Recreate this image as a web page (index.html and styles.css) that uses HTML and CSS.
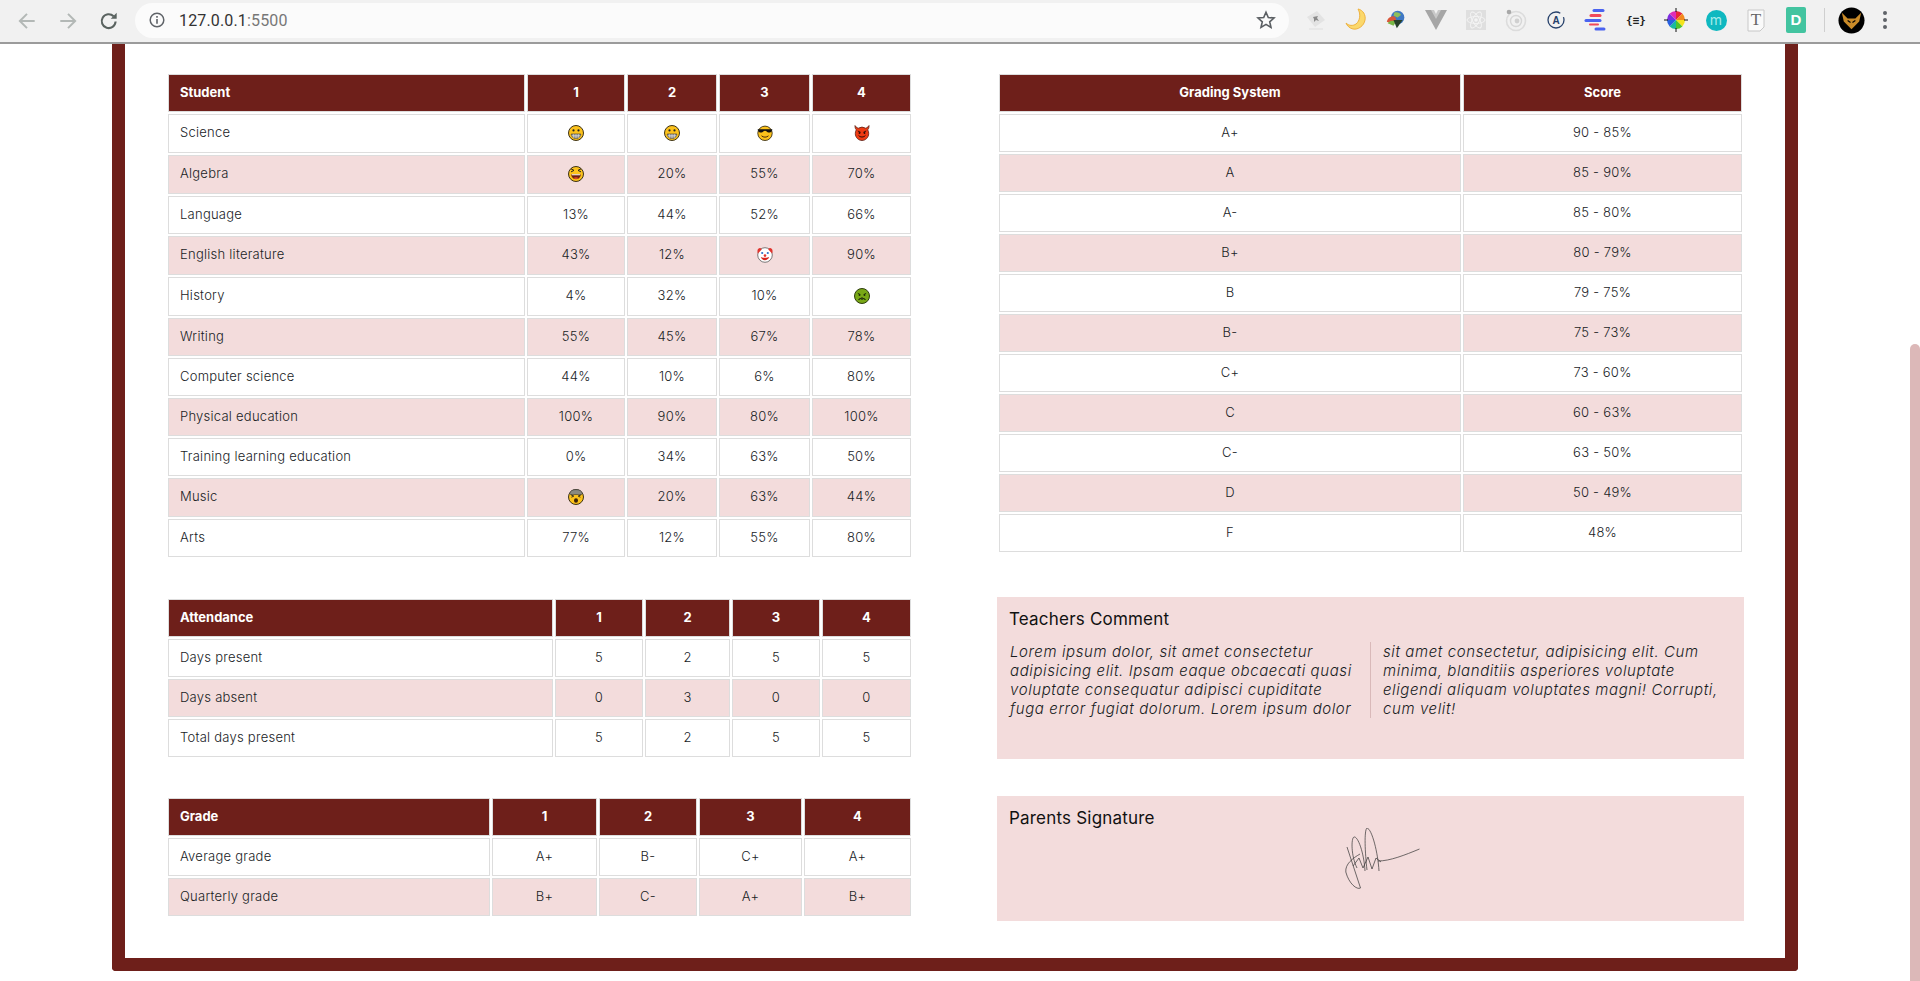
FILE: index.html
```html
<!DOCTYPE html>
<html lang="en">
<head>
<meta charset="utf-8">
<title>Report card</title>
<link rel="stylesheet" href="styles.css">
</head>
<body>
<svg class="defs" width="0" height="0" aria-hidden="true">
  <symbol id="e-grin" viewBox="0 0 16 16">
    <circle cx="8" cy="8" r="7.500" fill="#fcc21b" stroke="#3d3216" stroke-width="1"/>
    <path d="M3.200 9h9.600c0 2.600-2.100 4.500-4.800 4.500S3.200 11.600 3.200 9z" fill="#9a9a9a" stroke="#333" stroke-width=".6"/>
    <path d="M3.500 10.800h9M5.600 9v4M8 9v4.500M10.400 9v4" stroke="#ececec" stroke-width=".5"/>
    <circle cx="5.500" cy="5.400" r="1.100" fill="#222"/><circle cx="10.500" cy="5.400" r="1.100" fill="#222"/>
  </symbol>
  <symbol id="e-cool" viewBox="0 0 16 16">
    <circle cx="8" cy="8.300" r="7.200" fill="#fcc21b" stroke="#3d3216" stroke-width=".9"/>
    <path d="M.6 4.300h14.800l-.5 1.200c-.4 2.200-2.800 2.400-4.300 1.700-1-.5-1.400-1.500-2.600-1.500s-1.600 1-2.600 1.500c-1.500.7-3.900.5-4.300-1.700z" fill="#111"/>
    <path d="M4.500 10.800c1.800 1.800 5.200 1.800 7 0" fill="none" stroke="#4a2b08" stroke-width="1"/>
  </symbol>
  <symbol id="e-devil" viewBox="0 0 16 16">
    <path d="M1 .6C1 3 1.500 4 2.300 4.800a7 7 0 0 0-1 3.700c0 4 3.200 7 6.700 7s6.700-3 6.700-7a7 7 0 0 0-1-3.700C14.500 4 15 3 15 .6c-1 1.500-2.300 2.400-3.400 2.600a6.800 6.800 0 0 0-7.200 0C3.300 3 2 2.100 1 .6z" fill="#ee3a12" stroke="#5b2015" stroke-width=".8"/>
    <path d="M3.800 6l2.800 1.300M12.200 6L9.400 7.300" stroke="#3a100a" stroke-width="1"/>
    <circle cx="5.500" cy="8" r=".9" fill="#2a0a05"/><circle cx="10.500" cy="8" r=".9" fill="#2a0a05"/>
    <path d="M4.600 10.500c1.700 2 5.100 2 6.800 0" fill="none" stroke="#2a0a05" stroke-width="1"/>
  </symbol>
  <symbol id="e-laugh" viewBox="0 0 16 16">
    <circle cx="8" cy="8" r="7.500" fill="#fcc21b" stroke="#3d3216" stroke-width="1"/>
    <path d="M3 2.800l3 1.600-3 1.500M13 2.800l-3 1.600 3 1.500" fill="none" stroke="#222" stroke-width="1"/>
    <path d="M3.200 8.300h9.600c0 3-2.100 4.900-4.800 4.900s-4.800-1.900-4.800-4.900z" fill="#6e1f0e"/>
    <path d="M3.600 8.300h8.800l-.3 1H3.900z" fill="#fff"/>
    <path d="M5.500 12c1.500-1 3.500-1 5 0-1.400 1.300-3.600 1.300-5 0z" fill="#e8482a"/>
  </symbol>
  <symbol id="e-clown" viewBox="0 0 16 16">
    <circle cx="8" cy="8" r="7.300" fill="#fff" stroke="#5b5b5b" stroke-width=".8"/>
    <path d="M.9 6.500C-.3 3.500.9 1 3.200 1.100c.8.100 1.300.7 1.500 1.400zM15.100 6.500c1.200-3 0-5.500-2.300-5.400-.8.100-1.300.7-1.500 1.400z" fill="#e0342d"/>
    <circle cx="5.200" cy="6" r="1.100" fill="#2b70c9"/><circle cx="10.800" cy="6" r="1.100" fill="#2b70c9"/>
    <circle cx="8" cy="8.600" r="1.300" fill="#e0342d"/>
    <path d="M3.800 10c1.500 4.200 6.900 4.200 8.400 0-1.600 1-6.800 1-8.400 0z" fill="#d9231d"/>
  </symbol>
  <symbol id="e-sick" viewBox="0 0 16 16">
    <circle cx="8" cy="8" r="7.500" fill="#79a816" stroke="#2e3d10" stroke-width="1"/>
    <path d="M3.800 5.300l2.500 1.300M12.200 5.300L9.700 6.600" stroke="#1e2a08" stroke-width=".9"/>
    <circle cx="5.500" cy="7" r=".9" fill="#1e2a08"/><circle cx="10.500" cy="7" r=".9" fill="#1e2a08"/>
    <path d="M4.500 12c1.300-2.400 5.700-2.400 7 0" fill="none" stroke="#1e2a08" stroke-width="1.100"/>
    <path d="M7 9.500h2v2.200H7z" fill="#2e3d10"/>
  </symbol>
  <symbol id="e-shock" viewBox="0 0 16 16">
    <circle cx="8" cy="8" r="7.500" fill="#fcc21b" stroke="#3d3216" stroke-width="1"/>
    <path d="M1.600 4.700C2.300 1.500 5 .6 8 .6s5.700.9 6.400 4.100c-1 1.700-3.200.8-6.400.8s-5.400.9-6.400-.8z" fill="#8a8a80" stroke="#333" stroke-width=".6"/>
    <path d="M3.200 6l2.600 1.100L3.400 8.200M12.800 6l-2.600 1.100 2.200 1.100" fill="none" stroke="#222" stroke-width=".9"/>
    <ellipse cx="8" cy="11.500" rx="2" ry="2.300" fill="#3a2108"/>
  </symbol>
</svg>

<header class="chrome">
  <nav class="nav-buttons">
    <svg class="nav-icon" viewBox="0 0 20 20"><path d="M17 10H4M10 3.500L3.500 10l6.500 6.500" fill="none" stroke="#b3b8b6" stroke-width="1.800"/></svg>
    <svg class="nav-icon" viewBox="0 0 20 20"><path d="M3 10h13M10 3.500l6.500 6.500-6.500 6.500" fill="none" stroke="#b3b8b6" stroke-width="1.800"/></svg>
    <svg class="nav-icon" viewBox="0 0 20 20"><path d="M16 10.500a6.300 6.300 0 1 1-1.800-4.800" fill="none" stroke="#5a6360" stroke-width="1.900"/><path d="M17 2.600V8h-5.400z" fill="#5a6360"/></svg>
  </nav>
  <div class="omnibox">
    <svg class="info-icon" viewBox="0 0 16 16"><circle cx="8" cy="8" r="6.800" fill="none" stroke="#5f6368" stroke-width="1.500"/><path d="M7.200 7h1.600v4.800H7.200zM7.200 4.100h1.600v1.600H7.200z" fill="#5f6368"/></svg>
    <span class="url">127.0.0.1<span class="port">:5500</span></span>
    <svg class="star-icon" viewBox="0 0 20 20"><path d="M10 2.200l2.300 5.300 5.700.5-4.300 3.800 1.300 5.600-5-3-5 3 1.300-5.600L2 8l5.700-.5z" fill="none" stroke="#5b5f63" stroke-width="1.600"/></svg>
  </div>
  <div class="extensions">
    <span class="ext"><svg viewBox="0 0 24 24" width="24" height="24"><path d="M3 9l10-6 8 9-10 7z" fill="#e3e3e3"/><path d="M9 9l5-1-1 2 2 3-3-1-2 2 0-3z" fill="#8a8a8a"/><path d="M5 21h14" stroke="#e4e4e4" stroke-width="1.500"/></svg></span>
    <span class="ext"><svg viewBox="0 0 24 24" width="24" height="24"><path d="M14 1c5 1 8 6 7 11-1 6-7 10-12 9-3-.6-6-3-7-6 3 3 7 3 10 1 4-3 5-10 2-15z" fill="#fbd86b" stroke="#eeb23f" stroke-width="1"/></svg></span>
    <span class="ext"><svg viewBox="0 0 24 24" width="20" height="20"><circle cx="14" cy="9" r="8" fill="#3f78c4"/><path d="M10 3c3-1 7 0 8 3l-4 3-5-2z" fill="#8fbf5a"/><path d="M1 14c1-5 6-8 10-6l2 6-7 2z" fill="#d9563a"/><path d="M2 16c2-3 6-4 10-2l-3 5z" fill="#79b845"/><path d="M9 12h11l-7 10z" fill="#27402a"/></svg></span>
    <span class="ext"><svg viewBox="0 0 24 24" width="24" height="24"><path d="M1 2h7l4 7 4-7h7L12 22z" fill="#a6a6a6"/><path d="M7 2h3l2 4 2-4h3l-5 9z" fill="#c8c8c8"/></svg></span>
    <span class="ext"><svg viewBox="0 0 24 24" width="24" height="24"><rect x="2" y="2" width="20" height="20" fill="#dfdfdf"/><g fill="none" stroke="#f5f5f5" stroke-width=".9"><ellipse cx="12" cy="12" rx="9" ry="3.500"/><ellipse cx="12" cy="12" rx="9" ry="3.500" transform="rotate(60 12 12)"/><ellipse cx="12" cy="12" rx="9" ry="3.500" transform="rotate(120 12 12)"/></g><circle cx="12" cy="12" r="1.800" fill="#f5f5f5"/></svg></span>
    <span class="ext"><svg viewBox="0 0 24 24" width="24" height="24"><circle cx="12" cy="13" r="9.500" fill="none" stroke="#dcdcdc" stroke-width="1.600"/><circle cx="12" cy="13" r="5.500" fill="none" stroke="#d6d6d6" stroke-width="1.400"/><circle cx="13" cy="13" r="2.400" fill="#d0d0d0"/><circle cx="5" cy="4" r="2.300" fill="#a8a8a8"/></svg></span>
    <span class="ext"><svg viewBox="0 0 24 24" width="24" height="24"><circle cx="12" cy="12" r="8" fill="none" stroke="#27416b" stroke-width="1.300" stroke-dasharray="42 5"/><text class="ext-a" x="12" y="16" text-anchor="middle">A</text></svg></span>
    <span class="ext"><svg viewBox="0 0 24 24" width="24" height="24"><path d="M10 2.500h9" stroke="#4a63f0" stroke-width="3" stroke-linecap="round"/><path d="M7 7.500h9" stroke="#f0485a" stroke-width="3" stroke-linecap="round"/><path d="M2 12.500h14" stroke="#4a63f0" stroke-width="3" stroke-linecap="round"/><path d="M6 16.500h8" stroke="#f0485a" stroke-width="2" stroke-linecap="round"/><path d="M12 21h8" stroke="#4a63f0" stroke-width="3" stroke-linecap="round"/></svg></span>
    <span class="ext"><span class="ext-json">{≡}</span></span>
    <span class="ext"><svg viewBox="0 0 24 24" width="24" height="24"><path d="M12 3a9 9 0 0 1 6.400 2.600L12 12z" fill="#e9243a"/><path d="M18.400 5.600A9 9 0 0 1 21 12h-9z" fill="#f28a1e"/><path d="M21 12a9 9 0 0 1-2.600 6.400L12 12z" fill="#f4e31c"/><path d="M18.400 18.400A9 9 0 0 1 12 21v-9z" fill="#4dc42d"/><path d="M12 21a9 9 0 0 1-6.400-2.600L12 12z" fill="#18b9a0"/><path d="M5.600 18.400A9 9 0 0 1 3 12h9z" fill="#2760e0"/><path d="M3 12a9 9 0 0 1 2.600-6.400L12 12z" fill="#7b2ddf"/><path d="M5.600 5.600A9 9 0 0 1 12 3v9z" fill="#e02bb6"/><path d="M12 0v4M12 20v4M0 12h4M20 12h4" stroke="#111" stroke-width="1"/></svg></span>
    <span class="ext"><span class="ext-m">m</span></span>
    <span class="ext"><svg viewBox="0 0 24 24" width="24" height="24"><path d="M4 2h16v17l-4 4H4z" fill="#fafafa" stroke="#c8c8c8"/><text class="ext-t" x="12" y="17" text-anchor="middle">T</text></svg></span>
    <span class="ext"><span class="ext-d">D</span></span>
    <span class="ext-divider"></span>
    <span class="avatar"><svg viewBox="0 0 28 28" width="27" height="27"><circle cx="14" cy="14" r="13.500" fill="#000"/><path d="M4 6l6 6h8l6-6-2 9-8 8-8-8z" fill="#c98a28"/><path d="M10 14l3 2M18 14l-3 2" stroke="#000" stroke-width="1.200"/></svg></span>
    <span class="kebab"><i></i><i></i><i></i></span>
  </div>
</header>

<main class="sheet">
  <div class="sheet-grid">
    <table class="report student-table">
      <colgroup><col><col><col><col><col></colgroup>
      <thead><tr><th class="name">Student</th><th>1</th><th>2</th><th>3</th><th>4</th></tr></thead>
      <tbody>
        <tr class="tall"><td class="name">Science</td><td><svg class="emoji"><use href="#e-grin"/></svg></td><td><svg class="emoji"><use href="#e-grin"/></svg></td><td><svg class="emoji"><use href="#e-cool"/></svg></td><td><svg class="emoji"><use href="#e-devil"/></svg></td></tr>
        <tr class="tall"><td class="name">Algebra</td><td><svg class="emoji"><use href="#e-laugh"/></svg></td><td>20%</td><td>55%</td><td>70%</td></tr>
        <tr><td class="name">Language</td><td>13%</td><td>44%</td><td>52%</td><td>66%</td></tr>
        <tr class="tall"><td class="name">English literature</td><td>43%</td><td>12%</td><td><svg class="emoji"><use href="#e-clown"/></svg></td><td>90%</td></tr>
        <tr class="tall"><td class="name">History</td><td>4%</td><td>32%</td><td>10%</td><td><svg class="emoji"><use href="#e-sick"/></svg></td></tr>
        <tr><td class="name">Writing</td><td>55%</td><td>45%</td><td>67%</td><td>78%</td></tr>
        <tr><td class="name">Computer science</td><td>44%</td><td>10%</td><td>6%</td><td>80%</td></tr>
        <tr><td class="name">Physical education</td><td>100%</td><td>90%</td><td>80%</td><td>100%</td></tr>
        <tr><td class="name">Training learning education</td><td>0%</td><td>34%</td><td>63%</td><td>50%</td></tr>
        <tr class="tall"><td class="name">Music</td><td><svg class="emoji"><use href="#e-shock"/></svg></td><td>20%</td><td>63%</td><td>44%</td></tr>
        <tr><td class="name">Arts</td><td>77%</td><td>12%</td><td>55%</td><td>80%</td></tr>
      </tbody>
    </table>

    <table class="report scale-table">
      <colgroup><col><col></colgroup>
      <thead><tr><th>Grading System</th><th>Score</th></tr></thead>
      <tbody>
        <tr><td>A+</td><td>90 - 85%</td></tr>
        <tr><td>A</td><td>85 - 90%</td></tr>
        <tr><td>A-</td><td>85 - 80%</td></tr>
        <tr><td>B+</td><td>80 - 79%</td></tr>
        <tr><td>B</td><td>79 - 75%</td></tr>
        <tr><td>B-</td><td>75 - 73%</td></tr>
        <tr><td>C+</td><td>73 - 60%</td></tr>
        <tr><td>C</td><td>60 - 63%</td></tr>
        <tr><td>C-</td><td>63 - 50%</td></tr>
        <tr><td>D</td><td>50 - 49%</td></tr>
        <tr><td>F</td><td>48%</td></tr>
      </tbody>
    </table>

    <table class="report attendance-table">
      <colgroup><col><col><col><col><col></colgroup>
      <thead><tr><th class="name">Attendance</th><th>1</th><th>2</th><th>3</th><th>4</th></tr></thead>
      <tbody>
        <tr><td class="name">Days present</td><td>5</td><td>2</td><td>5</td><td>5</td></tr>
        <tr><td class="name">Days absent</td><td>0</td><td>3</td><td>0</td><td>0</td></tr>
        <tr><td class="name">Total days present</td><td>5</td><td>2</td><td>5</td><td>5</td></tr>
      </tbody>
    </table>

    <section class="panel">
      <h2 class="panel-title">Teachers Comment</h2>
      <p class="comment">Lorem ipsum dolor, sit amet consectetur adipisicing elit. Ipsam eaque obcaecati quasi voluptate consequatur adipisci cupiditate fuga error fugiat dolorum. Lorem ipsum dolor sit amet consectetur, adipisicing elit. Cum minima, blanditiis asperiores voluptate eligendi aliquam voluptates magni! Corrupti, cum velit!</p>
    </section>

    <table class="report grade-table">
      <colgroup><col><col><col><col><col></colgroup>
      <thead><tr><th class="name">Grade</th><th>1</th><th>2</th><th>3</th><th>4</th></tr></thead>
      <tbody>
        <tr><td class="name">Average grade</td><td>A+</td><td>B-</td><td>C+</td><td>A+</td></tr>
        <tr><td class="name">Quarterly grade</td><td>B+</td><td>C-</td><td>A+</td><td>B+</td></tr>
      </tbody>
    </table>

    <section class="panel panel-signature">
      <h2 class="panel-title">Parents Signature</h2>
      <svg class="signature" viewBox="0 0 75 62" width="75" height="62"><g fill="none" stroke="#333" stroke-width=".7"><path d="M2 19L15.500 60C12 62 4 56 .8 44 0 36 8 30 15 26"/><path d="M12 40C6 28 6 10 9 9c4-1 10 16 11 34"/><path d="M22 42C20 25 19 2 22 0c5 1 11 25 12 43"/><path d="M8 38l6-8 4 10 5-11 4 12 4-11 5 4"/><path d="M33 33c12 0 27-6 41.500-12"/></g></svg>
    </section>
  </div>
</main>
<div class="scroll-thumb"></div>
</body>
</html>
```
FILE: styles.css
```css
* { box-sizing: border-box; }
html, body { margin: 0; height: 981px; overflow: hidden; background: #fff; }
body { font-family: Inter, "Open Sans", sans-serif; font-size: 13px; color: #212529; position: relative; }
.defs { position: absolute; }

/* browser chrome */
.chrome { height: 44px; display: flex; align-items: center; background: #f1f1f1; border-bottom: 2px solid #9b9b9b; }
.nav-buttons { display: flex; align-items: center; gap: 19px; padding-left: 16px; width: 135px; }
.nav-icon { width: 22px; height: 22px; }
.omnibox { width: 1154px; height: 35px; margin-top: -2px; display: flex; align-items: center; background: #fbfbfb; border-radius: 18px; padding: 0 13px 0 14px; }
.info-icon { width: 16px; height: 16px; }
.url { font-family: Roboto, sans-serif; font-size: 16px; letter-spacing: .15px; color: #333; margin-left: 14px; }
.port { color: #777; }
.star-icon { width: 20px; height: 20px; margin-left: auto; }
.extensions { display: flex; align-items: center; flex: 1; padding-left: 7px; margin-top: -2px; }
.ext { width: 40px; height: 28px; display: flex; align-items: center; justify-content: center; }
.ext-a { font: 700 10px "Liberation Sans", sans-serif; fill: #27416b; }
.ext-t { font: 400 17px "Liberation Serif", serif; fill: #666; }
.ext-json { font: 700 11px "DejaVu Sans Mono", monospace; color: #222; }
.ext-m { width: 21px; height: 21px; border-radius: 50%; background: #0fb8c0; color: #a7ecea; font: 400 14px/19px Inter, sans-serif; text-align: center; }
.ext-d { width: 20px; height: 26px; border-radius: 2px; background: #43c4a0; color: #fff; font: 700 15px/26px "Liberation Sans", sans-serif; text-align: center; }
.ext-divider { width: 1px; height: 24px; background: #cfcfcf; margin-left: 8px; }
.avatar { margin-left: 13px; display: flex; }
.kebab { display: flex; flex-direction: column; gap: 3px; margin-left: 18px; }
.kebab i { width: 4px; height: 4px; border-radius: 50%; background: #5f6368; }

/* sheet */
.sheet { width: 1686px; margin-left: 112px; height: 927px; border: 13px solid #6e1f1a; border-top: 0; border-radius: 0 0 4px 4px; padding: 28px 41px 0; }
.sheet-grid { display: grid; grid-template-columns: 747px 747px; column-gap: 84px; grid-template-rows: 488px 162px auto; row-gap: 37px; align-items: start; }

/* tables */
.report { width: 747px; table-layout: fixed; border-collapse: separate; border-spacing: 2px; }
.report th, .report td { height: 38px; padding: 0 4px 2px; border: 1px solid #ddd; text-align: center; vertical-align: middle; font-size: 13px; }
.report th { background: #6e1f1a; color: #fff; font-weight: 700; }
.report td { background: #fff; color: #191c1f; font-weight: 300; letter-spacing: .25px; }
.report tbody tr:nth-child(even) td { background: #f3dcdc; }
.report tr.tall td { height: 39px; padding-bottom: 3px; }
.report .name { text-align: left; padding-left: 11px; }
.emoji { display: block; width: 16px; height: 16px; margin: 2px auto 0; }

.student-table col:nth-child(1) { width: 357px; }
.student-table col:nth-child(2) { width: 98px; }
.student-table col:nth-child(3) { width: 90px; }
.student-table col:nth-child(4) { width: 91px; }
.student-table col:nth-child(5) { width: 99px; }
.attendance-table col:nth-child(1) { width: 385px; }
.attendance-table col:nth-child(2) { width: 88px; }
.attendance-table col:nth-child(3) { width: 85px; }
.attendance-table col:nth-child(4) { width: 88px; }
.attendance-table col:nth-child(5) { width: 89px; }
.grade-table col:nth-child(1) { width: 322px; }
.grade-table col:nth-child(2) { width: 105px; }
.grade-table col:nth-child(3) { width: 98px; }
.grade-table col:nth-child(4) { width: 103px; }
.grade-table col:nth-child(5) { width: 107px; }
.scale-table col:nth-child(1) { width: 462px; }
.scale-table col:nth-child(2) { width: 279px; }

/* panels */
.panel { height: 162px; background: #f3dcdc; padding: 12px 13px 0; }
.panel-signature { height: 125px; }
.panel-title { margin: 0 -1px 13px; transform: none; font-size: 17px; line-height: 20px; font-weight: 400; color: #111; letter-spacing: .2px; }
.panel-signature .panel-title { margin-bottom: 0; }
.comment { margin: 0; font-size: 15px; line-height: 19px; font-style: italic; font-weight: 300; letter-spacing: .6px; color: #191c1f; column-count: 2; column-gap: 25px; column-rule: 1px solid #d9b9b9; }
.signature { display: block; margin-left: 335px; }

.scroll-thumb { position: absolute; right: 0; top: 344px; width: 10px; bottom: 0; background: #dcb8b8; border-radius: 5px 5px 0 0; }
```
